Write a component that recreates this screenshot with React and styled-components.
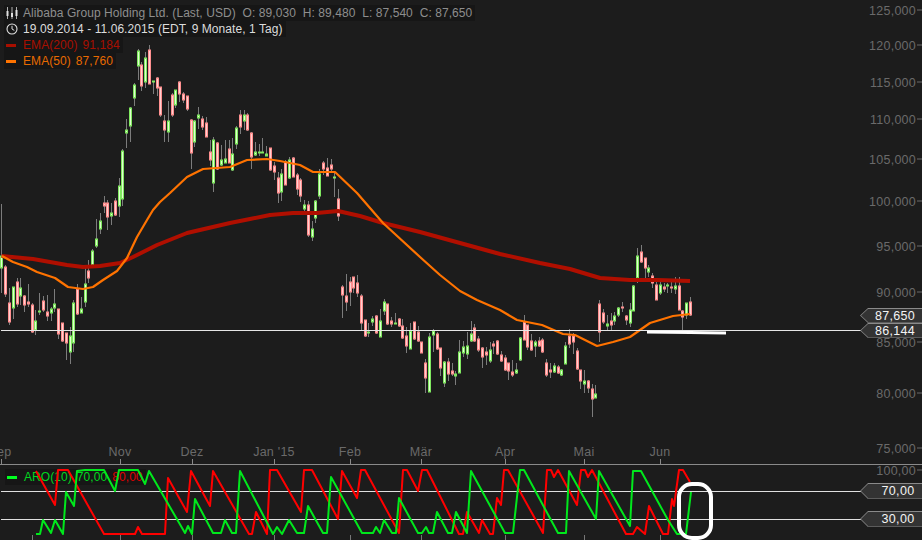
import styled, { createGlobalStyle } from "styled-components";

const GlobalStyle = createGlobalStyle`
   html, body { margin: 0; padding: 0; background: #1c1c1c; overflow: hidden; }
`;

// [x, bodyTop, bodyBottom, wickTop, wickBottom, up]
const CANDLES = [
   [1.5,256,268,204,293,1],[5.5,267,294,265,297,0],[9.5,303,322,288,325,0],[13.5,287,308,287,319,1],
   [17.5,282,304,278,307,0],[20.5,288,296,278,305,1],[24.5,296,305,295,312,0],[28.5,302,304,284,307,0],
   [32.5,305,332,303,333,0],[35.5,321,330,310,335,1],[39.5,311,312,293,315,1],[43.5,301,310,296,312,0],
   [47.5,312,316,295,321,0],[51.5,309,313,307,321,1],[54.5,304,308,289,312,1],[58.5,309,334,309,339,0],
   [62.5,323,341,323,342,0],[66.5,333,343,333,360,0],[70.5,336,352,327,364,1],[73.5,303,343,300,352,1],
   [77.5,289,314,284,315,0],[81.5,309,313,297,313,1],[85.5,284,302,268,307,1],[88.5,271,278,260,283,0],
   [92.5,251,265,249,265,1],[96.5,239,246,219,248,1],[100.5,221,229,213,234,1],[104.5,203,206,196,213,0],
   [107.5,203,217,200,230,0],[111.5,213,216,203,225,1],[115.5,201,215,198,216,0],[119.5,186,206,178,217,1],
   [122.5,151,199,149,206,1],[126.5,130,133,119,148,1],[130.5,108,126,107,142,1],[134.5,85,98,83,106,1],
   [138.5,51,66,49,80,1],[141.5,65,86,62,91,0],[145.5,58,82,52,88,1],[149.5,50,84,45,84,0],
   [153.5,81,82,81,94,1],[157.5,78,88,77,96,0],[160.5,87,115,87,117,0],[164.5,121,130,115,142,0],
   [168.5,121,132,101,142,1],[172.5,95,115,93,117,0],[175.5,90,105,90,108,1],[179.5,82,94,81,102,0],
   [183.5,94,100,92,103,0],[187.5,96,109,96,111,0],[191.5,120,153,119,169,0],[194.5,121,142,120,147,1],
   [198.5,115,118,107,129,1],[202.5,119,127,116,130,0],[206.5,123,137,117,137,0],[210.5,152,160,140,166,0],
   [213.5,140,183,137,192,1],[217.5,143,169,142,170,0],[221.5,160,165,145,166,1],[225.5,159,163,140,163,1],
   [229.5,149,163,140,163,0],[232.5,154,170,138,171,1],[236.5,128,144,126,149,1],[240.5,115,127,110,134,0],
   [244.5,115,121,110,130,1],[247.5,115,130,113,131,0],[251.5,133,157,132,169,0],[255.5,152,155,142,156,1],
   [259.5,152,153,144,156,1],[262.5,152,153,138,153,1],[266.5,154,156,146,156,1],[270.5,148,170,148,171,0],
   [274.5,166,172,162,180,0],[278.5,178,193,172,203,0],[281.5,174,192,169,201,1],[285.5,162,185,160,185,0],
   [289.5,160,178,157,179,1],[293.5,158,177,157,177,0],[297.5,175,189,173,195,0],[300.5,180,196,178,202,0],
   [304.5,205,209,200,213,1],[308.5,205,235,201,237,0],[312.5,229,237,221,241,1],[315.5,201,218,200,223,1],
   [319.5,174,196,169,199,1],[323.5,163,169,161,175,0],[327.5,168,176,158,176,0],[331.5,165,169,159,173,0],
   [334.5,177,178,173,197,1],[338.5,199,216,189,221,0],[342.5,287,295,285,318,0],[346.5,296,302,274,311,0],
   [350.5,282,292,277,306,0],[353.5,277,288,277,293,0],[357.5,283,293,275,297,0],[361.5,296,323,294,330,0],
   [365.5,320,336,320,337,0],[368.5,332,333,323,337,1],[372.5,319,322,316,326,1],[376.5,316,333,315,334,0],
   [380.5,321,337,309,337,1],[384.5,302,311,299,315,1],[387.5,304,324,304,325,0],[391.5,321,324,317,327,0],
   [395.5,323,324,313,324,1],[399.5,319,326,318,327,0],[402.5,326,338,319,339,0],[406.5,336,346,327,353,0],
   [410.5,331,349,323,349,1],[414.5,322,339,322,340,0],[418.5,332,341,326,342,0],[421.5,342,353,342,353,0],
   [425.5,363,378,359,393,0],[429.5,337,392,333,392,1],[433.5,331,335,329,352,1],[437.5,334,349,332,350,0],
   [440.5,348,368,348,376,0],[444.5,362,383,361,387,1],[448.5,362,374,358,381,0],[452.5,371,374,363,376,0],
   [455.5,374,376,371,385,1],[459.5,352,373,340,373,1],[463.5,347,353,341,357,1],[467.5,346,354,332,359,1],
   [471.5,334,341,321,342,1],[474.5,328,341,324,342,0],[478.5,339,350,336,352,0],[482.5,348,357,347,368,0],
   [486.5,352,355,347,365,0],[490.5,350,361,342,363,1],[493.5,344,346,341,354,0],[497.5,341,354,340,355,0],
   [501.5,355,361,351,362,0],[505.5,358,370,355,371,0],[508.5,363,371,363,380,0],[512.5,372,375,360,377,0],
   [516.5,370,373,363,374,1],[520.5,338,360,337,361,1],[524.5,322,340,315,340,0],[527.5,325,347,325,350,0],
   [531.5,341,350,334,351,0],[535.5,342,346,340,357,1],[539.5,341,346,337,347,0],[542.5,340,352,338,353,0],
   [546.5,363,375,359,377,0],[550.5,370,372,363,378,0],[554.5,366,372,363,373,1],[558.5,367,373,365,374,0],
   [561.5,370,375,369,376,1],[565.5,346,364,342,364,1],[569.5,336,344,329,348,0],[573.5,336,342,333,354,0],
   [577.5,351,369,348,370,0],[580.5,370,381,370,389,0],[584.5,381,384,370,393,1],[588.5,381,388,380,393,0],
   [592.5,389,399,384,417,0],[595.5,394,398,385,398,1],[599.5,304,332,300,342,0],[603.5,313,322,309,324,0],
   [607.5,324,326,315,330,1],[611.5,321,325,313,330,0],[614.5,316,321,312,325,1],[618.5,308,315,307,317,1],
   [622.5,307,308,302,312,0],[626.5,316,320,315,325,0],[630.5,310,323,303,327,1],[633.5,286,311,285,311,1],
   [637.5,256,278,248,283,1],[641.5,252,262,245,263,0],[645.5,258,268,258,278,0],[648.5,268,272,265,277,1],
   [652.5,276,283,273,288,0],[656.5,285,300,280,300,0],[660.5,285,293,282,295,1],[664.5,287,289,283,292,0],
   [667.5,285,286,283,293,1],[671.5,287,288,282,293,0],[675.5,286,289,277,294,1],[679.5,286,310,277,310,0],
   [682.5,311,317,310,330,0],[686.5,303,315,303,319,1],[690.5,302,315,297,316,0],
];

const EMA_200 = "1.5,256 33,259 67,265 83,267 100,266 120,263 133,257 157,245 187,233 230,223 250,219 270,215 293,213 317,213 338,211 360,216 383,223 420,232 460,243 500,254 540,263 570,269 600,278 630,280 657,280 690,281";
const EMA_50 = "2,256 13,262 27,267 37,272 55,278 68,287 83,289 93,287 103,280 117,271 127,258 137,237 147,220 153,210 160,202 170,193 187,177 203,169 230,167 247,160 267,159 280,161 300,165 313,172 335,172 357,193 383,223 420,257 440,275 460,291 477,300 500,310 517,320 542,325 563,334 575,335 597,346 613,342 630,337 650,323 673,316 690,314";
const ARO_UP = "36,534 40,534 43,520 51,533 55,520 63,534 66,492 74,506 77,471 85,470 104,470 115,491 119,470 138,470 145,484 149,471 185,533 188,526 192,534 195,499 213,533 221,533 225,520 232,533 236,533 240,471 273,534 277,527 282,534 289,520 297,533 304,533 308,506 323,533 327,533 331,477 362,533 373,533 376,527 380,533 384,520 392,533 396,533 399,498 418,533 422,533 426,527 429,533 433,533 437,512 448,533 452,533 456,512 467,533 471,471 505,533 513,533 520,470 524,470 558,533 566,533 569,471 596,519 599,471 630,526 633,471 641,471 668,520 677,534 686,534 691,492";
const ARO_DOWN = "36,471 55,505 58,470 68,470 104,534 135,534 138,527 142,534 165,534 168,478 187,512 191,471 210,506 213,471 249,534 252,534 256,512 267,534 270,470 277,470 301,512 304,470 312,470 338,519 342,471 357,498 361,470 365,470 399,533 403,470 407,470 418,491 422,470 427,470 459,534 463,534 467,512 479,533 482,520 490,534 493,534 497,498 501,505 504,470 508,470 543,533 547,470 551,470 554,477 558,470 577,505 581,470 585,470 588,477 592,470 626,534 633,534 637,527 645,534 649,506 663,534 668,534 672,499 674,506 679,470 683,470 690,482";

const PRICE_LABELS = [
   ["125,000", 10], ["120,000", 45], ["115,000", 82], ["110,000", 119], ["105,000", 159], ["100,000", 201],
   ["95,000", 246], ["90,000", 292], ["85,000", 342], ["80,000", 393], ["75,000", 448],
];
const MONTHS = [
   ["Sep", 1, 0], ["Nov", 120, 120], ["Dez", 192, 192], ["Jan '15", 274, 274], ["Feb", 350, 350],
   ["Mär", 421, 421], ["Apr", 505, 505], ["Mai", 584, 584], ["Jun", 660, 660],
];
const LOWER_TICKS = [32, 120, 192, 274, 350, 421, 505, 584, 660];

const Chart = styled.div`
   position: relative;
   width: 922px;
   height: 540px;
   overflow: hidden;
   background: #1c1c1c;
   font-family: "Liberation Sans", Arial, sans-serif;
`;

// sits above the legends: the lines of the chart run over the legend text
const ChartSvg = styled.svg`
   position: relative;
   z-index: 1;
   display: block;
`;

const AxisText = styled.text`
   font-family: "Liberation Sans", Arial, sans-serif;
   font-size: 12.5px;
   fill: #6a6a6a;
   letter-spacing: 0.25px;
`;

const Legend = styled.div`
   position: absolute;
   left: 4px;
   top: 5px;
   display: flex;
   flex-direction: column;
   align-items: flex-start;
`;

const LegendRow = styled.div`
   display: flex;
   align-items: center;
   height: 16px;
   padding: 0 3px 0 2px;
   gap: 5px;
   background: #161616;
   color: ${p => p.$color};
   font-size: 12px;
   letter-spacing: 0.07px;
   white-space: pre;
`;

const IconSlot = styled.svg`
   flex: none;
   width: 12px;
   height: 12px;
`;

const Dash = styled.span`
   flex: none;
   width: 10px;
   height: 3px;
   margin-right: 2px;
   background: ${p => p.$color};
`;

const Value = styled.span`
   margin-left: 5px;
   color: ${p => p.$color || "inherit"};
`;

const IndicatorLegend = styled(LegendRow)`
   position: absolute;
   left: 5px;
   top: 469px;
`;

const PriceTag = styled.div`
   position: absolute;
   z-index: 2;
   left: 868px;
   top: ${p => p.$top}px;
   width: 54px;
   height: ${p => p.$h || 15}px;
   box-sizing: border-box;
   display: flex;
   align-items: center;
   justify-content: center;
   padding-left: ${p => p.$pad || 0}px;
   background: #333333;
   color: #f4f4f4;
   font-size: 12.5px;
   letter-spacing: 0.3px;
   border-top: 1px solid #8a8a8a;
   border-bottom: 1px solid #5c5c5c;
   &::before {
      content: "";
      position: absolute;
      left: -8px;
      top: -1px;
      width: 8px;
      height: ${p => p.$h || 15}px;
      background: #8a8a8a;
      clip-path: polygon(100% 0, 0 50%, 100% 100%);
   }
   &::after {
      content: "";
      position: absolute;
      left: -7px;
      top: 0;
      width: 7px;
      height: ${p => (p.$h || 15) - 2}px;
      background: #333333;
      clip-path: polygon(100% 0, 0 50%, 100% 100%);
   }
`;

const render_candle = (candle, i) => {
   const [x, top, bottom, wick_top, wick_bottom, up] = candle;
   const edge = up ? "#80e860" : "#ff9090";
   const fill = up ? "#e0ffd0" : "#ffd0d0";
   return <g key={i}>
      <line x1={x} x2={x} y1={wick_top} y2={wick_bottom} stroke="#7c7c7c" strokeWidth="1" />
      <rect x={x - 1} y={top} width="2" height={Math.max(bottom - top, 1)} fill={fill} stroke={edge} strokeWidth="1" />
   </g>;
};

const PriceChartDrawing = () => (
   <ChartSvg width="922" height="540" viewBox="0 0 922 540">
      {PRICE_LABELS.map(([label, y]) => <g key={label}>
         <AxisText x="916" y={y + 4.5} textAnchor="end">{label}</AxisText>
         <line x1="917" x2="922" y1={y} y2={y} stroke="#6a6a6a" />
      </g>)}
      <AxisText x="916" y="474.5" textAnchor="end">100,00</AxisText>
      <line x1="917" x2="922" y1="470" y2="470" stroke="#6a6a6a" />

      {CANDLES.map(render_candle)}
      <polyline points={EMA_200} fill="none" stroke="#b00f00" strokeWidth="4" strokeLinejoin="round" />
      <polyline points={EMA_50} fill="none" stroke="#ff7300" strokeWidth="2.2" strokeLinejoin="round" />

      <line x1="1" x2="862" y1="330.5" y2="330.5" stroke="#e6e6e6" />
      <polyline points="647,332 690,332.5 726,333" fill="none" stroke="#ffffff" strokeWidth="3" />

      <line x1="0" x2="922" y1="464.5" y2="464.5" stroke="#8a8a8a" />
      {MONTHS.map(([label, tick, mid]) => <g key={label}>
         <AxisText x={mid} y="456" textAnchor="middle">{label}</AxisText>
         <line x1={tick + 0.5} x2={tick + 0.5} y1="459" y2="464" stroke="#8a8a8a" />
      </g>)}
      {LOWER_TICKS.map(x => <line key={x} x1={x + 0.5} x2={x + 0.5} y1="535" y2="540" stroke="#777777" />)}

      <line x1="1" x2="868" y1="491.5" y2="491.5" stroke="#e0e0e0" />
      <line x1="1" x2="868" y1="519.5" y2="519.5" stroke="#e0e0e0" />
      <polyline points={ARO_DOWN} fill="none" stroke="#ff0000" strokeWidth="2" strokeLinejoin="round" />
      <polyline points={ARO_UP} fill="none" stroke="#00e81c" strokeWidth="2" strokeLinejoin="round" />
      <rect x="679" y="484" width="32" height="54" rx="13" fill="none" stroke="#ffffff" strokeWidth="4" />
   </ChartSvg>
);

const CandleIcon = () => (
   <IconSlot viewBox="0 0 12 12">
      <path d="M1.5 0v12M6 0v12M10.5 0v12" stroke="#b0b0b0" strokeWidth="1" />
      <rect x="0.5" y="4" width="2" height="5" fill="#e0e0e0" />
      <rect x="5" y="6" width="2" height="4" fill="#e0e0e0" />
      <rect x="9.5" y="3" width="2" height="6" fill="#e0e0e0" />
   </IconSlot>
);

const ClockIcon = () => (
   <IconSlot viewBox="0 0 12 12">
      <circle cx="6" cy="6" r="5" fill="none" stroke="#e0e0e0" strokeWidth="1.1" />
      <path d="M6 2.8V6l2.3 1.4" fill="none" stroke="#e0e0e0" strokeWidth="1" />
   </IconSlot>
);

const App = () => (
   <Chart>
      <GlobalStyle />
      <Legend>
         <LegendRow $color="#8e8e8e">
            <CandleIcon />
            <span>Alibaba Group Holding Ltd. (Last, USD)  O: 89,030  H: 89,480  L: 87,540  C: 87,650</span>
         </LegendRow>
         <LegendRow $color="#dcdcdc">
            <ClockIcon />
            <span>19.09.2014 - 11.06.2015 (EDT, 9 Monate, 1 Tag)</span>
         </LegendRow>
         <LegendRow $color="#a80f00">
            <Dash $color="#a80f00" />
            <span>EMA(200)<Value>91,184</Value></span>
         </LegendRow>
         <LegendRow $color="#e86a00">
            <Dash $color="#ff7300" />
            <span>EMA(50)<Value>87,760</Value></span>
         </LegendRow>
      </Legend>
      <IndicatorLegend $color="#00d820">
         <Dash $color="#00ff20" />
         <span>ARO(10)<Value>70,00</Value><Value $color="#e00000">80,00</Value></span>
      </IndicatorLegend>
      <PriceChartDrawing />
      <PriceTag $top={308}>87,650</PriceTag>
      <PriceTag $top={323}>86,144</PriceTag>
      <PriceTag $top={483} $h={16} $pad={6}>70,00</PriceTag>
      <PriceTag $top={511} $h={16} $pad={6}>30,00</PriceTag>
   </Chart>
);

export default App;
